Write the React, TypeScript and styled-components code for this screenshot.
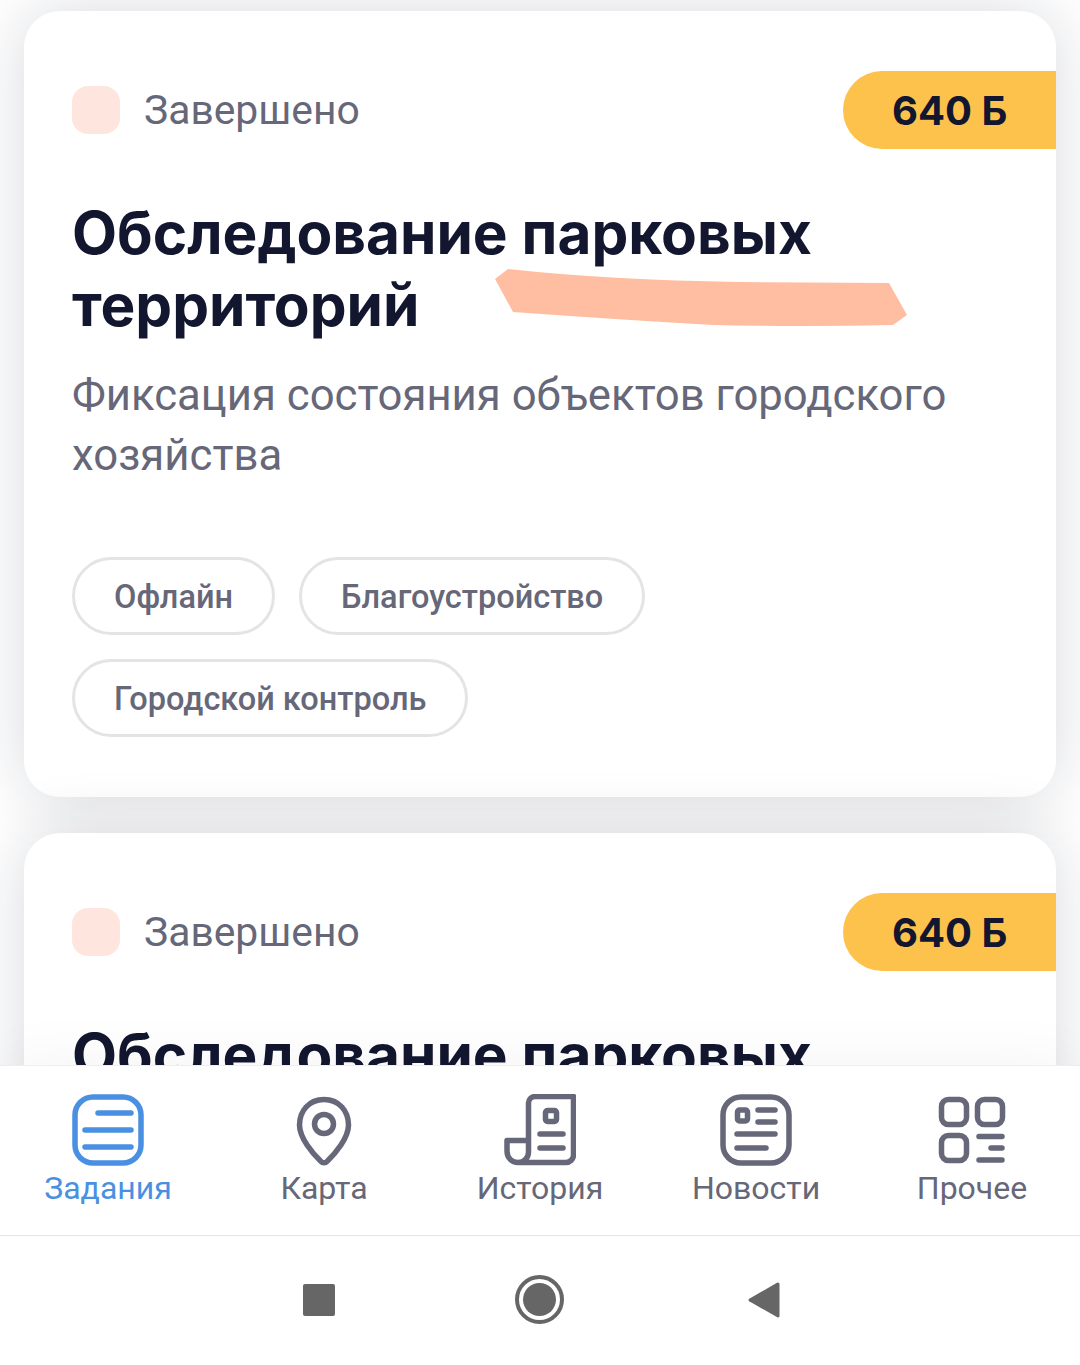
import React from "react";
import styled, { createGlobalStyle } from "styled-components";

const GlobalStyle = createGlobalStyle`
  html, body {
    margin: 0;
    padding: 0;
    background: #fff;
  }
  * {
    box-sizing: border-box;
  }
`;

const Page = styled.div`
  width: 1080px;
  height: 1365px;
  display: flex;
  flex-direction: column;
  overflow: hidden;
  background: #fff;
  font-family: Roboto, "Liberation Sans", sans-serif;
`;

const TaskList = styled.div`
  height: 1065px;
  padding: 11px 24px 0;
  display: flex;
  flex-direction: column;
  gap: 36px;
  overflow: hidden;
`;

const Card = styled.div`
  position: relative;
  flex: none;
  height: 786px;
  padding-top: 60px;
  background: #fff;
  border-radius: 36px;
  box-shadow: 0 0 64px rgba(20, 24, 50, 0.16);
`;

const CardHead = styled.div`
  display: flex;
  align-items: center;
  justify-content: space-between;
  padding-left: 48px;
`;

const Status = styled.div`
  display: flex;
  align-items: center;
  gap: 24px;
  font-size: 40.8px;
  color: #666778;
`;

const StatusDot = styled.span`
  width: 48px;
  height: 48px;
  border-radius: 16px;
  background: #fee5de;
`;

const Price = styled.div`
  width: 213px;
  height: 78px;
  padding-left: 49px;
  display: flex;
  align-items: center;
  border-radius: 39px 0 0 39px;
  background: #fdc24c;
  font-family: Inter, sans-serif;
  font-size: 40px;
  font-weight: 700;
  color: #12162e;
`;

const CardBody = styled.div`
  padding: 48px 48px 0;
`;

const Title = styled.h2`
  margin: 0;
  font-family: Inter, sans-serif;
  font-size: 58.5px;
  line-height: 72px;
  font-weight: 700;
  color: #12162e;
`;

const Description = styled.p`
  margin: 24px 0 0;
  font-size: 43.7px;
  line-height: 60px;
  color: #666778;
`;

const Tags = styled.div`
  margin-top: 72px;
  display: flex;
  flex-wrap: wrap;
  gap: 24px;
`;

const Tag = styled.span`
  height: 78px;
  padding: 1px 39px 0;
  display: flex;
  align-items: center;
  border: 3px solid #e4e4e6;
  border-radius: 39px;
  font-size: 32.5px;
  font-weight: 500;
  color: #666778;
`;

const Scribble = styled.svg`
  position: absolute;
  left: 465px;
  top: 252px;
`;

const TabBar = styled.nav`
  position: relative;
  height: 171px;
  padding-top: 28px;
  display: grid;
  grid-template-columns: repeat(5, 216px);
  align-items: start;
  background: #fff;
  border-top: 1px solid #eeeef0;
  border-bottom: 1px solid #e6e6e6;
  box-shadow: 0 0 64px rgba(20, 24, 50, 0.05);
`;

const Tab = styled.div<{ $active?: boolean }>`
  display: flex;
  flex-direction: column;
  align-items: center;
  gap: 2px;
  font-size: 32px;
  line-height: 40px;
  color: ${(p) => (p.$active ? "#4a90e2" : "#666778")};
`;

const TabIcon = styled.svg`
  display: block;
  width: 72px;
  height: 72px;
  fill: none;
  stroke: currentColor;
  stroke-width: 5.5;
  stroke-linecap: round;
  stroke-linejoin: round;
`;

const SystemBar = styled.div`
  flex: 1;
  position: relative;
  padding-bottom: 2px;
  display: grid;
  grid-template-columns: repeat(3, 64px);
  justify-content: center;
  column-gap: 157px;
  align-items: center;
  justify-items: center;
  background: #fff;
`;

const RecentButton = styled.span`
  width: 32px;
  height: 32px;
  border-radius: 2px;
  background: #666;
`;

const HomeButton = styled.span`
  width: 49px;
  height: 49px;
  margin-left: -1px;
  border-radius: 50%;
  border: 4px solid #666;
  padding: 4px;
  &::after {
    content: "";
    display: block;
    width: 100%;
    height: 100%;
    border-radius: 50%;
    background: #666;
  }
`;

const BackButton = styled.svg`
  margin-left: 6px;
  fill: #666;
`;

const tags = ["Офлайн", "Благоустройство", "Городской контроль"];

const TaskCard: React.FC<{ marked?: boolean }> = ({ marked }) => {
  return (
    <Card>
      <CardHead>
        <Status>
          <StatusDot />
          Завершено
        </Status>
        <Price>640 Б</Price>
      </CardHead>
      <CardBody>
        <Title>Обследование парковых территорий</Title>
        <Description>Фиксация состояния объектов городского хозяйства</Description>
        <Tags>
          {tags.map((t) => (
            <Tag key={t}>{t}</Tag>
          ))}
        </Tags>
      </CardBody>
      {marked && (
        <Scribble width="420" height="64" viewBox="0 0 420 64">
          <path
            d="M6 16 L19 6 Q120 17 250 19 L400 20 L418 52 L404 62 Q310 64 224 62 Q120 56 24 49 Z"
            fill="#ffbda1"
          />
        </Scribble>
      )}
    </Card>
  );
};

export default function App() {
  return (
    <Page>
      <GlobalStyle />
      <TaskList>
        <TaskCard marked />
        <TaskCard />
      </TaskList>
      <TabBar>
        <Tab $active>
          <TabIcon viewBox="0 0 72 72">
            <rect x="3" y="3" width="66" height="66" rx="18" />
            <path d="M26 19H59M13 36H59M13 53H59" />
          </TabIcon>
          Задания
        </Tab>
        <Tab>
          <TabIcon viewBox="0 0 72 72">
            <path d="M36 5.5C21 5.5 11.5 17 11.5 31C11.5 44 25 60 33 67.5a4 4 0 0 0 6 0C47 60 60.5 44 60.5 31C60.5 17 51 5.5 36 5.5Z" />
            <circle cx="36" cy="30" r="9.5" />
          </TabIcon>
          Карта
        </Tab>
        <Tab>
          <TabIcon viewBox="0 0 72 72">
            <path d="M24.5 46.5H3V57C3 64 8 68.5 14 68.5H62a7.5 7.5 0 0 0 7.5-7.5V2.5H31a6.5 6.5 0 0 0-6.5 6.5V58C24.5 64 20 68.5 14 68.5" />
            <rect x="41.5" y="16.5" width="11" height="11" rx="2" />
            <path d="M36 40H59M36 54H59" />
          </TabIcon>
          История
        </Tab>
        <Tab>
          <TabIcon viewBox="0 0 72 72">
            <rect x="3" y="3" width="66" height="66" rx="18" />
            <rect x="17.5" y="16" width="10" height="11" rx="2" />
            <path d="M38 16H55M38 28H55M17 40H55M17 54H46" />
          </TabIcon>
          Новости
        </Tab>
        <Tab>
          <TabIcon viewBox="0 0 72 72">
            <rect x="5.5" y="5.5" width="25" height="25" rx="7" />
            <rect x="41.5" y="5.5" width="25" height="25" rx="7" />
            <rect x="5.5" y="41.5" width="25" height="25" rx="7" />
            <path d="M43 42.5H66M55 54H66M43 66H66" />
          </TabIcon>
          Прочее
        </Tab>
      </TabBar>
      <SystemBar>
        <RecentButton />
        <HomeButton />
        <BackButton width="32" height="38" viewBox="0 0 32 38">
          <path d="M30 1.5a1.5 1.5 0 0 1 1.5 1.5V35a1.5 1.5 0 0 1-2.2 1.3L1.2 20.2a1.4 1.4 0 0 1 0-2.4L29 1.7Z" />
        </BackButton>
      </SystemBar>
    </Page>
  );
}
